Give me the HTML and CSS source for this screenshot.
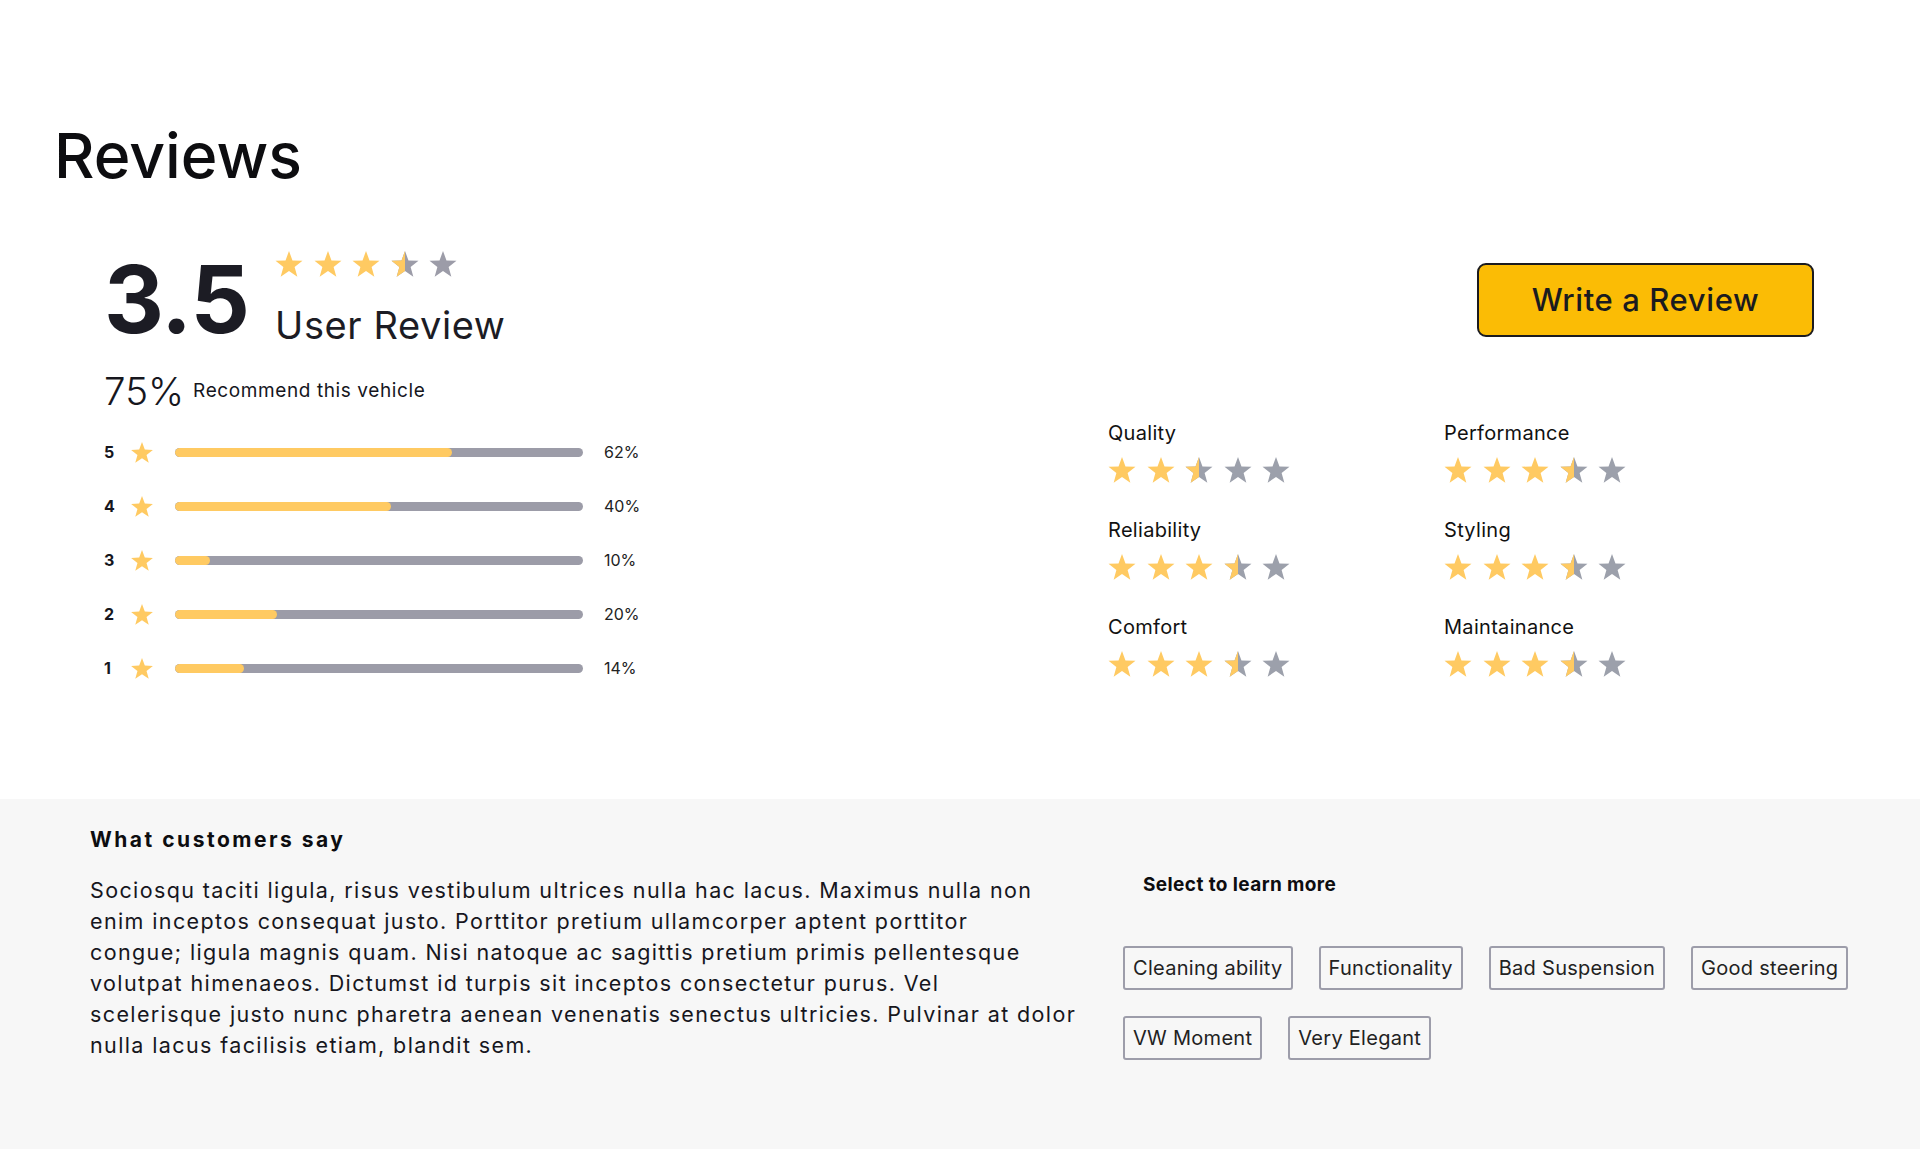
FILE: index.html
```html
<!DOCTYPE html>
<html lang="en">
<head>
<meta charset="utf-8">
<title>Reviews</title>
<link rel="stylesheet" href="styles.css">
</head>
<body>
<svg class="sprite" aria-hidden="true">
  <defs>
    <path id="star" d="M12 0.5 L14.939 8.455 L23.413 8.792 L16.755 14.045 L19.053 22.208 L12 17.5 L4.947 22.208 L7.245 14.045 L0.587 8.792 L9.061 8.455 Z"/>
    <clipPath id="left-half"><rect x="0" y="0" width="12" height="24"/></clipPath>
  </defs>
</svg>
<main class="reviews">
  <section class="overview">
    <h1 class="title">Reviews</h1>
    <div class="overview-body">
      <div class="summary">
        <div class="score-row">
          <span class="score">3.5</span>
          <div class="score-meta">
            <div class="stars">
              <svg class="star" viewBox="0.5 0.5 23 22"><use href="#star" class="on"/></svg>
              <svg class="star" viewBox="0.5 0.5 23 22"><use href="#star" class="on"/></svg>
              <svg class="star" viewBox="0.5 0.5 23 22"><use href="#star" class="on"/></svg>
              <svg class="star" viewBox="0.5 0.5 23 22"><use href="#star" class="off"/><use href="#star" class="on" clip-path="url(#left-half)"/></svg>
              <svg class="star" viewBox="0.5 0.5 23 22"><use href="#star" class="off"/></svg>
            </div>
            <span class="score-label">User Review</span>
          </div>
        </div>
        <div class="recommend">
          <span class="recommend-pct">75%</span>
          <span class="recommend-text">Recommend this vehicle</span>
        </div>
        <ul class="dist">
          <li class="dist-row">
            <span class="dist-num">5</span>
            <svg class="dist-star" viewBox="0.5 0.5 23 22"><use href="#star" class="on"/></svg>
            <span class="bar"><span class="bar-fill" style="width:68%"></span></span>
            <span class="dist-pct">62%</span>
          </li>
          <li class="dist-row">
            <span class="dist-num">4</span>
            <svg class="dist-star" viewBox="0.5 0.5 23 22"><use href="#star" class="on"/></svg>
            <span class="bar"><span class="bar-fill" style="width:53%"></span></span>
            <span class="dist-pct">40%</span>
          </li>
          <li class="dist-row">
            <span class="dist-num">3</span>
            <svg class="dist-star" viewBox="0.5 0.5 23 22"><use href="#star" class="on"/></svg>
            <span class="bar"><span class="bar-fill" style="width:8.6%"></span></span>
            <span class="dist-pct">10%</span>
          </li>
          <li class="dist-row">
            <span class="dist-num">2</span>
            <svg class="dist-star" viewBox="0.5 0.5 23 22"><use href="#star" class="on"/></svg>
            <span class="bar"><span class="bar-fill" style="width:25%"></span></span>
            <span class="dist-pct">20%</span>
          </li>
          <li class="dist-row">
            <span class="dist-num">1</span>
            <svg class="dist-star" viewBox="0.5 0.5 23 22"><use href="#star" class="on"/></svg>
            <span class="bar"><span class="bar-fill" style="width:17%"></span></span>
            <span class="dist-pct">14%</span>
          </li>
        </ul>
      </div>
      <div class="side">
        <button class="write-btn" type="button">Write a Review</button>
        <div class="aspects">
          <div class="aspect">
            <span class="aspect-name">Quality</span>
            <div class="stars aspect-stars">
              <svg class="star" viewBox="0.5 0.5 23 22"><use href="#star" class="on"/></svg>
              <svg class="star" viewBox="0.5 0.5 23 22"><use href="#star" class="on"/></svg>
              <svg class="star" viewBox="0.5 0.5 23 22"><use href="#star" class="off"/><use href="#star" class="on" clip-path="url(#left-half)"/></svg>
              <svg class="star" viewBox="0.5 0.5 23 22"><use href="#star" class="off"/></svg>
              <svg class="star" viewBox="0.5 0.5 23 22"><use href="#star" class="off"/></svg>
            </div>
          </div>
          <div class="aspect">
            <span class="aspect-name">Performance</span>
            <div class="stars aspect-stars">
              <svg class="star" viewBox="0.5 0.5 23 22"><use href="#star" class="on"/></svg>
              <svg class="star" viewBox="0.5 0.5 23 22"><use href="#star" class="on"/></svg>
              <svg class="star" viewBox="0.5 0.5 23 22"><use href="#star" class="on"/></svg>
              <svg class="star" viewBox="0.5 0.5 23 22"><use href="#star" class="off"/><use href="#star" class="on" clip-path="url(#left-half)"/></svg>
              <svg class="star" viewBox="0.5 0.5 23 22"><use href="#star" class="off"/></svg>
            </div>
          </div>
          <div class="aspect">
            <span class="aspect-name">Reliability</span>
            <div class="stars aspect-stars">
              <svg class="star" viewBox="0.5 0.5 23 22"><use href="#star" class="on"/></svg>
              <svg class="star" viewBox="0.5 0.5 23 22"><use href="#star" class="on"/></svg>
              <svg class="star" viewBox="0.5 0.5 23 22"><use href="#star" class="on"/></svg>
              <svg class="star" viewBox="0.5 0.5 23 22"><use href="#star" class="off"/><use href="#star" class="on" clip-path="url(#left-half)"/></svg>
              <svg class="star" viewBox="0.5 0.5 23 22"><use href="#star" class="off"/></svg>
            </div>
          </div>
          <div class="aspect">
            <span class="aspect-name">Styling</span>
            <div class="stars aspect-stars">
              <svg class="star" viewBox="0.5 0.5 23 22"><use href="#star" class="on"/></svg>
              <svg class="star" viewBox="0.5 0.5 23 22"><use href="#star" class="on"/></svg>
              <svg class="star" viewBox="0.5 0.5 23 22"><use href="#star" class="on"/></svg>
              <svg class="star" viewBox="0.5 0.5 23 22"><use href="#star" class="off"/><use href="#star" class="on" clip-path="url(#left-half)"/></svg>
              <svg class="star" viewBox="0.5 0.5 23 22"><use href="#star" class="off"/></svg>
            </div>
          </div>
          <div class="aspect">
            <span class="aspect-name">Comfort</span>
            <div class="stars aspect-stars">
              <svg class="star" viewBox="0.5 0.5 23 22"><use href="#star" class="on"/></svg>
              <svg class="star" viewBox="0.5 0.5 23 22"><use href="#star" class="on"/></svg>
              <svg class="star" viewBox="0.5 0.5 23 22"><use href="#star" class="on"/></svg>
              <svg class="star" viewBox="0.5 0.5 23 22"><use href="#star" class="off"/><use href="#star" class="on" clip-path="url(#left-half)"/></svg>
              <svg class="star" viewBox="0.5 0.5 23 22"><use href="#star" class="off"/></svg>
            </div>
          </div>
          <div class="aspect">
            <span class="aspect-name">Maintainance</span>
            <div class="stars aspect-stars">
              <svg class="star" viewBox="0.5 0.5 23 22"><use href="#star" class="on"/></svg>
              <svg class="star" viewBox="0.5 0.5 23 22"><use href="#star" class="on"/></svg>
              <svg class="star" viewBox="0.5 0.5 23 22"><use href="#star" class="on"/></svg>
              <svg class="star" viewBox="0.5 0.5 23 22"><use href="#star" class="off"/><use href="#star" class="on" clip-path="url(#left-half)"/></svg>
              <svg class="star" viewBox="0.5 0.5 23 22"><use href="#star" class="off"/></svg>
            </div>
          </div>
        </div>
      </div>
    </div>
  </section>
  <section class="customers">
    <h2 class="customers-title">What customers say</h2>
    <div class="customers-body">
      <p class="customers-text">Sociosqu taciti ligula, risus vestibulum ultrices nulla hac lacus. Maximus nulla non<br>
      enim inceptos consequat justo. Porttitor pretium ullamcorper aptent porttitor<br>
      congue; ligula magnis quam. Nisi natoque ac sagittis pretium primis pellentesque<br>
      volutpat himenaeos. Dictumst id turpis sit inceptos consectetur purus. Vel<br>
      scelerisque justo nunc pharetra aenean venenatis senectus ultricies. Pulvinar at dolor<br>
      nulla lacus facilisis etiam, blandit sem.</p>
      <div class="topics">
        <h3 class="topics-title">Select to learn more</h3>
        <div class="chips">
          <button class="chip" type="button">Cleaning ability</button>
          <button class="chip" type="button">Functionality</button>
          <button class="chip" type="button">Bad Suspension</button>
          <button class="chip" type="button">Good steering</button>
          <button class="chip" type="button">VW Moment</button>
          <button class="chip" type="button">Very Elegant</button>
        </div>
      </div>
    </div>
  </section>
</main>
</body>
</html>
```

FILE: styles.css
```css
* {
  box-sizing: border-box;
}

html,
body {
  margin: 0;
  padding: 0;
}

body {
  font-family: Inter, "Liberation Sans", sans-serif;
  color: #16161d;
  background: #ffffff;
}

.sprite {
  display: block;
  width: 0;
  height: 0;
  overflow: hidden;
}

.on {
  fill: #ffca62;
}

.off {
  fill: #9c9ca8;
}

.aspect-stars .off {
  fill: #9ca0ab;
}

/* ---------- overview ---------- */

.overview {
  padding: 124px 106px 119px 54px;
}

.title {
  margin: 0;
  font-size: 62.5px;
  font-weight: 500;
  line-height: 1;
  color: #0d0d10;
}

.overview-body {
  display: flex;
  justify-content: space-between;
  margin-top: 64px;
  padding-left: 50px;
}

.score-row {
  display: flex;
  align-items: flex-start;
}

.score {
  margin-top: 2px;
  font-size: 93px;
  font-weight: 700;
  line-height: 1;
  letter-spacing: -1px;
  color: #1c1c24;
}

.score-meta {
  display: flex;
  flex-direction: column;
  margin-left: 26px;
}

.stars {
  display: flex;
  gap: 10.5px;
}

.star {
  display: block;
  width: 28px;
  height: 26px;
}

.score-label {
  margin-top: 29px;
  font-size: 38px;
  line-height: 1;
  letter-spacing: 0.6px;
  color: #1c1c24;
}

.recommend {
  display: flex;
  align-items: center;
  gap: 9px;
  margin-top: 26px;
}

.recommend-pct {
  font-size: 38.5px;
  font-weight: 300;
  line-height: 1;
}

.recommend-text {
  font-size: 19px;
  line-height: 1;
  letter-spacing: 0.6px;
}

.dist {
  list-style: none;
  margin: 30px 0 0;
  padding: 0;
  display: flex;
  flex-direction: column;
  gap: 30px;
}

.dist-row {
  display: flex;
  align-items: center;
  height: 24px;
}

.dist-num {
  width: 27px;
  font-size: 16px;
  font-weight: 700;
  line-height: 1;
}

.dist-star {
  display: block;
  width: 22px;
  height: 21px;
}

.bar {
  display: block;
  margin-left: 22px;
  width: 408px;
  height: 9px;
  border-radius: 5px;
  background: #9c9ca8;
  overflow: hidden;
}

.bar-fill {
  display: block;
  height: 100%;
  border-radius: 5px;
  background: #ffca62;
}

.dist-pct {
  margin-left: 21px;
  font-size: 16px;
  line-height: 1;
  color: #222;
}

.side {
  display: flex;
  flex-direction: column;
  align-items: flex-end;
  width: 706px;
}

.write-btn {
  margin-top: 12px;
  width: 337px;
  height: 74px;
  background: #fbbc05;
  border: 2px solid #1b1b1f;
  border-radius: 9px;
  font-family: inherit;
  font-size: 31px;
  font-weight: 500;
  line-height: 1;
  letter-spacing: 0.6px;
  color: #1b1b1f;
  cursor: pointer;
}

.aspects {
  align-self: stretch;
  margin-top: 86px;
  display: grid;
  grid-template-columns: 336px 336px;
  row-gap: 37px;
}

.aspect {
  display: flex;
  flex-direction: column;
  gap: 14px;
}

.aspect-name {
  font-size: 20px;
  line-height: 1;
  letter-spacing: 0.3px;
  color: #111;
}

/* ---------- customers ---------- */

.customers {
  background: #f7f7f7;
  padding: 30px 40px 88px 90px;
}

.customers-title {
  margin: 0;
  font-size: 21px;
  font-weight: 700;
  line-height: 1;
  letter-spacing: 2.5px;
  color: #0d0d10;
}

.customers-body {
  display: flex;
  gap: 30px;
  margin-top: 25px;
}

.customers-text {
  margin: 0;
  width: 1003px;
  flex: none;
  font-size: 21.5px;
  line-height: 31px;
  letter-spacing: 1.38px;
  white-space: nowrap;
  color: #16161d;
}

.topics {
  flex: 1;
}

.topics-title {
  margin: 0 0 0 20px;
  font-size: 19px;
  font-weight: 700;
  line-height: 1;
  letter-spacing: 0.4px;
  color: #0d0d10;
}

.chips {
  display: flex;
  flex-wrap: wrap;
  gap: 26px;
  margin-top: 52px;
}

.chip {
  height: 44px;
  padding: 0 8px;
  border: 2px solid #9d9daa;
  border-radius: 3px;
  background: transparent;
  font-family: inherit;
  font-size: 20px;
  line-height: 1;
  letter-spacing: 0.28px;
  color: #222;
  cursor: pointer;
}
```
